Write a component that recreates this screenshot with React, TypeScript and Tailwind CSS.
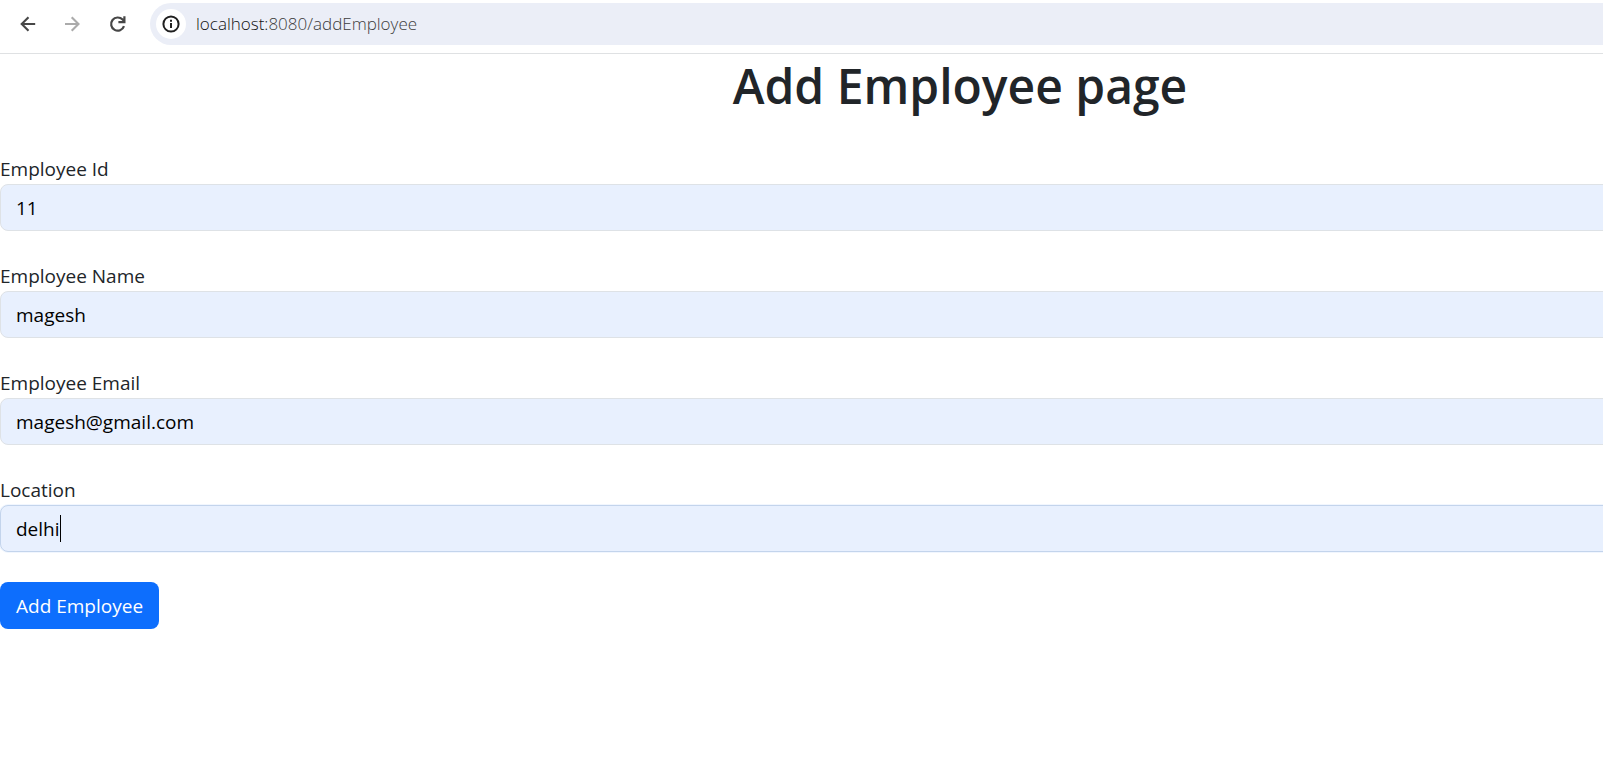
import { useState } from "react";

function BackIcon() {
  return (
    <svg viewBox="0 0 24 24" className="size-6" fill="none" stroke="currentColor" strokeWidth="2.1" aria-hidden="true">
      <path d="M19.2 12H5.8M12.5 5.2L5.7 12l6.8 6.8" />
    </svg>
  );
}

function ForwardIcon() {
  return (
    <svg viewBox="0 0 24 24" className="size-6" fill="none" stroke="currentColor" strokeWidth="2.1" aria-hidden="true">
      <path d="M4 12H17.4M10.7 5.2l6.8 6.8-6.8 6.8" />
    </svg>
  );
}

function ReloadIcon() {
  return (
    <svg viewBox="0 0 24 24" className="size-6" fill="none" stroke="currentColor" strokeWidth="2.2" aria-hidden="true">
      <path d="M18 14.2A6.6 6.6 0 1 1 16.6 7.6L18.2 9.2M18.4 4.2v5.9H12.4" />
    </svg>
  );
}

function InfoIcon() {
  return (
    <svg viewBox="0 0 20 20" className="size-5" fill="none" stroke="currentColor" strokeWidth="2" aria-hidden="true">
      <circle cx="10" cy="10" r="7.6" />
      <path d="M10 9v5M10 5.8v2" />
    </svg>
  );
}

function BrowserBar() {
  return (
    <header className="flex h-[54px] items-start border-b border-[#dfe1e3] bg-white pt-[3px]">
      <nav className="flex h-[42px] w-[150px] shrink-0 items-center gap-[21px] pl-4 text-[#474747]" aria-label="Browser">
        <button type="button" aria-label="Back">
          <BackIcon />
        </button>
        <button type="button" aria-label="Forward" className="text-[#ababab]" disabled>
          <ForwardIcon />
        </button>
        <button type="button" aria-label="Reload">
          <ReloadIcon />
        </button>
      </nav>
      <div className="flex h-[42px] grow items-center gap-[10px] rounded-l-full bg-[#ebeef7] pl-[6px]">
        <button
          type="button"
          aria-label="View site information"
          className="flex size-[30px] items-center justify-center rounded-full bg-white text-[#1f1f1f]"
        >
          <InfoIcon />
        </button>
        <a href="#addEmployee" className="text-[17px] leading-6 font-[350] text-[#3c3c3c]">
          <span className="text-[#111111]">localhost:</span>8080/addEmployee
        </a>
      </div>
    </header>
  );
}

type FieldProps = { id: string; label: string; initial: string; type?: string; active?: boolean };

function Field({ id, label, initial, type = "text", active = false }: FieldProps) {
  const [value, setValue] = useState(initial);
  return (
    <div className="text-[19px] leading-[30px]">
      <label htmlFor={id} className="block">
        {label}
      </label>
      <div className="relative">
        <input
          id={id}
          type={type}
          value={value}
          onChange={(event) => setValue(event.target.value)}
          className={
            active
              ? "block h-[47px] w-full rounded-lg border border-[#c3d4ec] bg-[#e8f0fe] px-[15px] text-black caret-transparent shadow-[0_0_0_1px_#f1f6fe] outline-none"
              : "block h-[47px] w-full rounded-lg border border-[#dee2e6] bg-[#e8f0fe] px-[15px] text-black outline-none"
          }
        />
        {active && (
          <div className="pointer-events-none absolute inset-y-0 left-4 flex items-center" aria-hidden="true">
            <span className="invisible whitespace-pre">{value}</span>
            <span className="h-[27px] w-px bg-black" />
          </div>
        )}
      </div>
    </div>
  );
}

export default function App() {
  return (
    <div className="min-h-screen overflow-x-hidden bg-white font-['Open_Sans','Noto_Sans',sans-serif] text-[#212529]">
      <BrowserBar />
      <main className="-mr-[317px]">
        <h1 className="text-center text-[48px] leading-16 font-semibold">Add Employee page</h1>
        <form className="mt-9 flex flex-col items-stretch gap-[30px]" onSubmit={(event) => event.preventDefault()}>
          <Field id="employee-id" label="Employee Id" initial="11" />
          <Field id="employee-name" label="Employee Name" initial="magesh" />
          <Field id="employee-email" label="Employee Email" initial="magesh@gmail.com" type="email" />
          <Field id="location" label="Location" initial="delhi" active />
          <button
            type="submit"
            className="h-[47px] self-start rounded-lg bg-[#0d6efd] px-4 text-[19px] leading-[30px] text-white"
          >
            Add Employee
          </button>
        </form>
      </main>
    </div>
  );
}
